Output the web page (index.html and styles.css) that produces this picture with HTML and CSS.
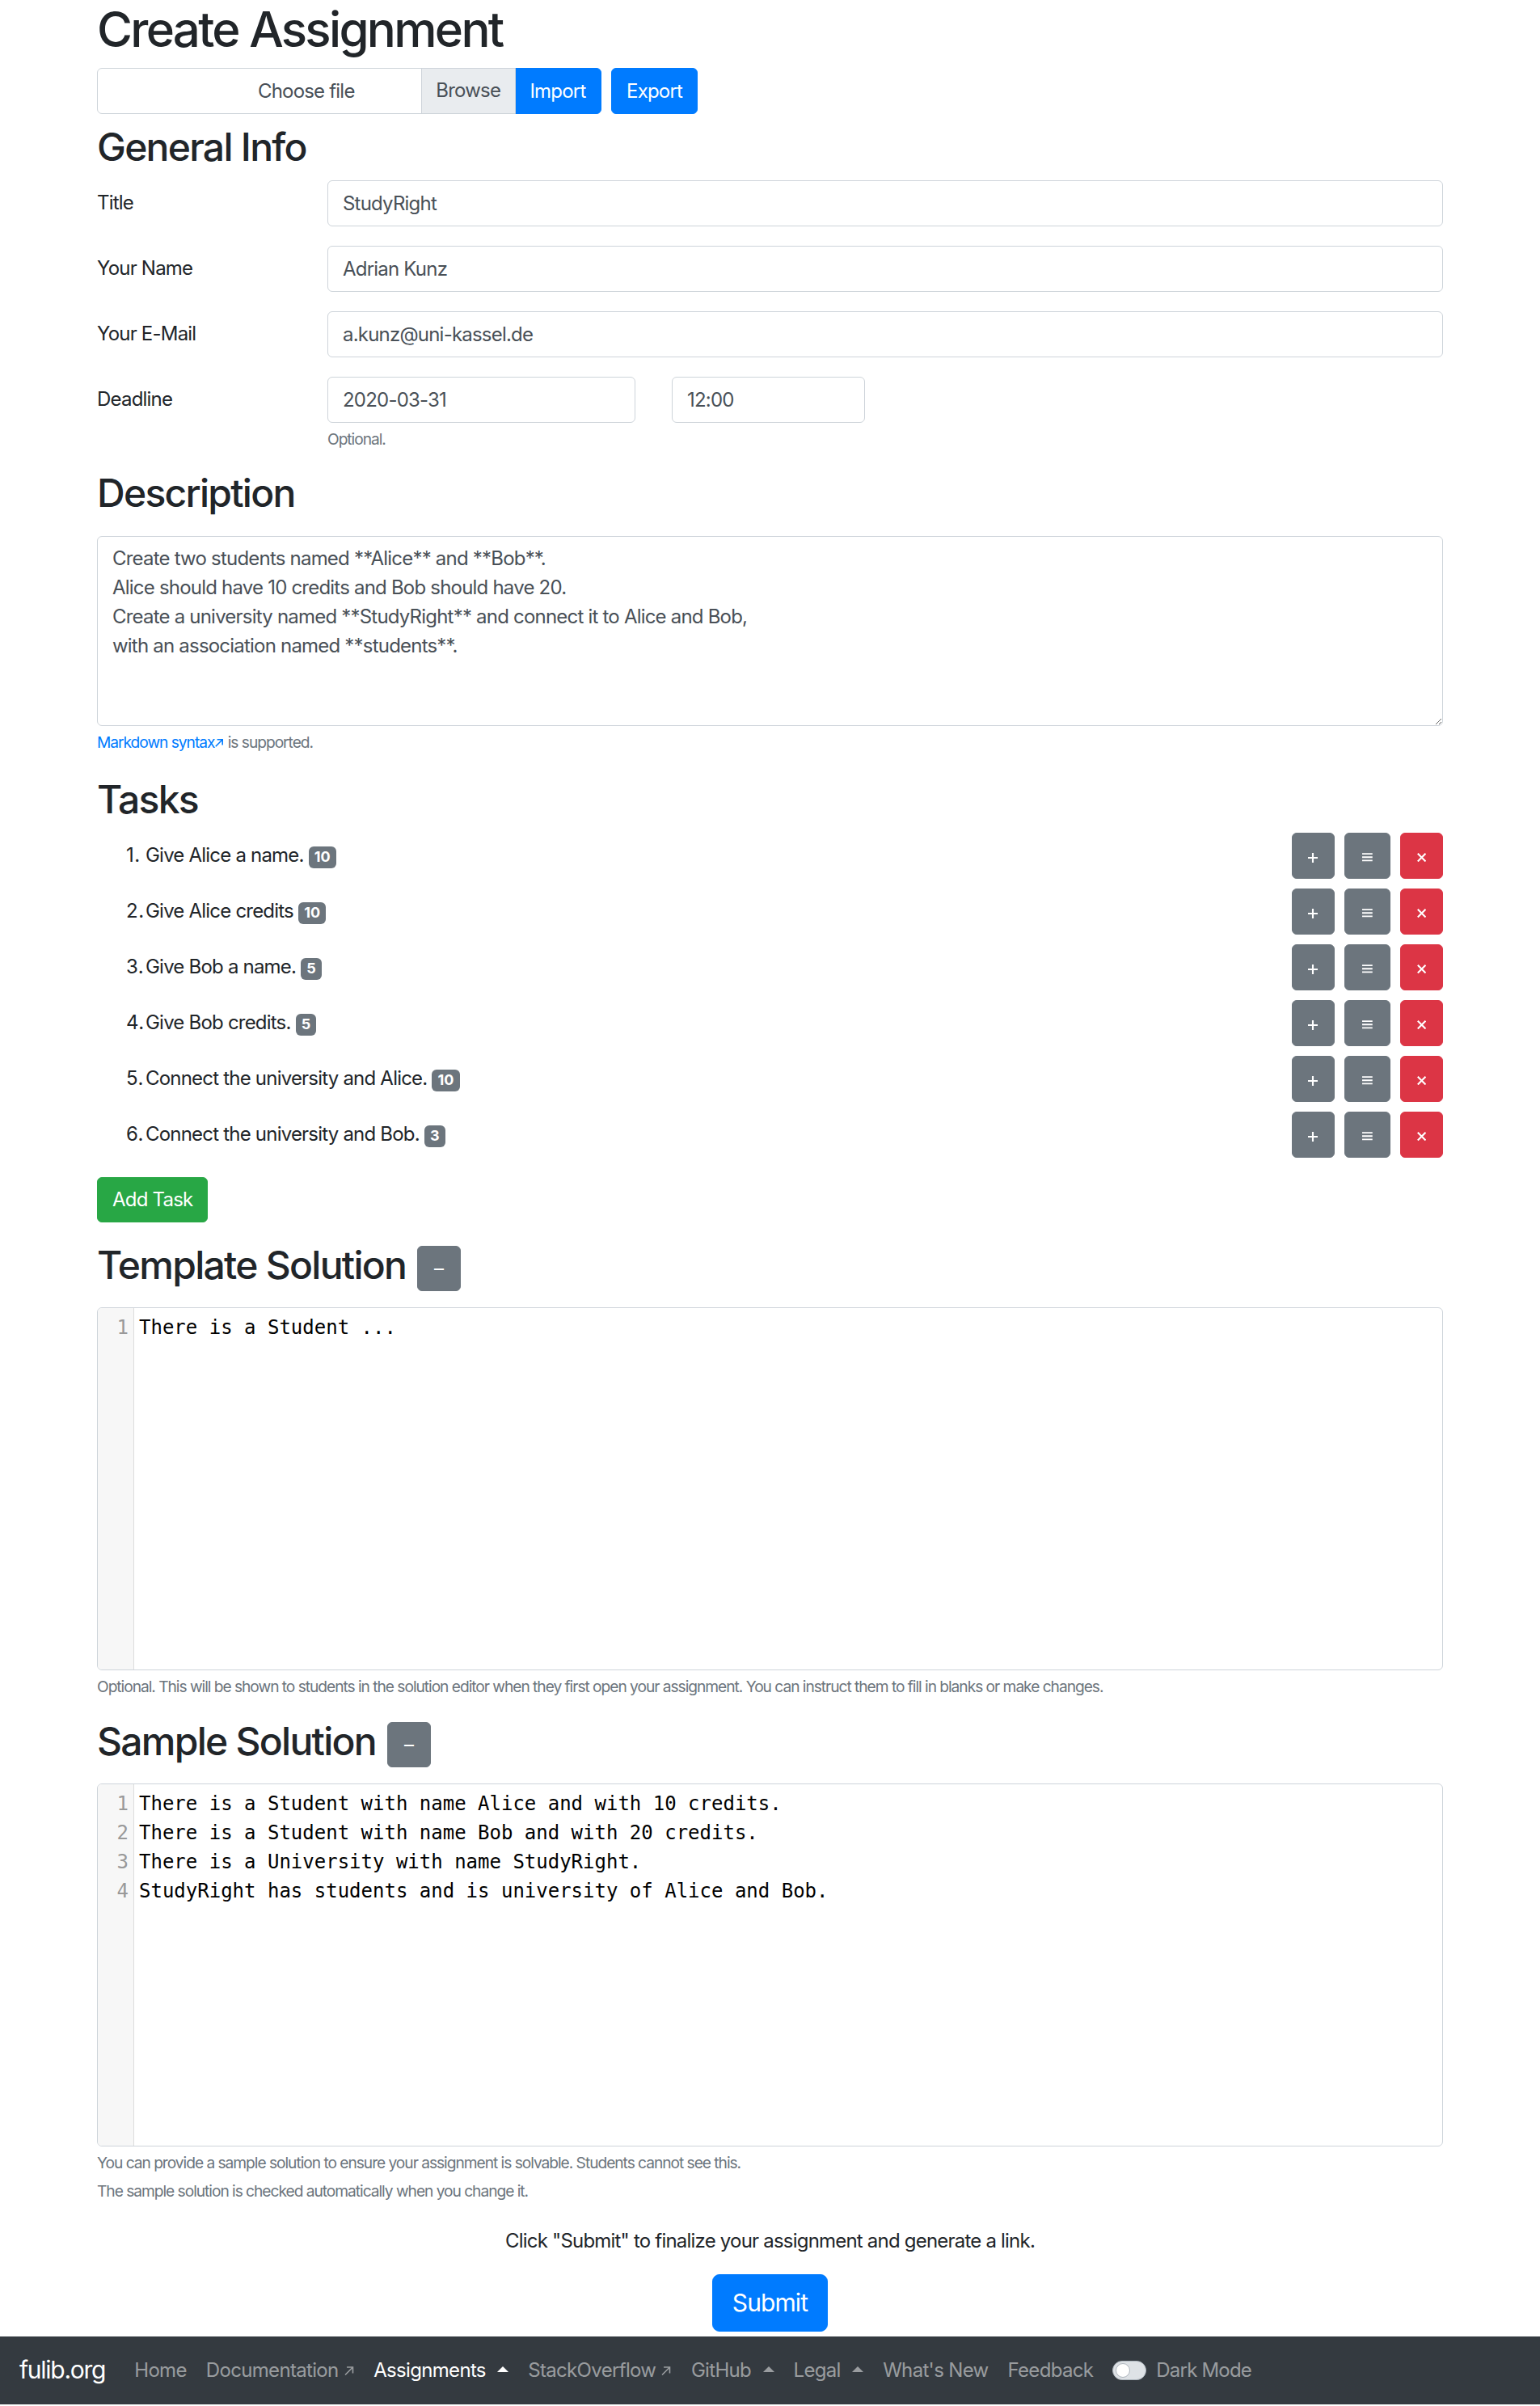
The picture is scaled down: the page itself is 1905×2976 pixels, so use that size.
FILE: index.html
```html
<!DOCTYPE html>
<html lang="en">
<head>
<meta charset="utf-8">
<title>Create Assignment</title>
<link rel="stylesheet" href="styles.css">
</head>
<body>
<main class="container">
  <h1 class="page-title">Create Assignment</h1>

  <div class="import-row">
    <div class="input-group">
      <label class="custom-file">
        <span class="custom-file-label">Choose file</span>
        <span class="custom-file-browse">Browse</span>
      </label>
      <button class="btn btn-primary btn-attached" type="button">Import</button>
    </div>
    <button class="btn btn-primary" type="button">Export</button>
  </div>

  <h2>General Info</h2>
  <div class="form-row">
    <label class="col-label">Title</label>
    <div class="col-field"><input class="form-control" type="text" value="StudyRight"></div>
  </div>
  <div class="form-row">
    <label class="col-label">Your Name</label>
    <div class="col-field"><input class="form-control" type="text" value="Adrian Kunz"></div>
  </div>
  <div class="form-row">
    <label class="col-label">Your E-Mail</label>
    <div class="col-field"><input class="form-control" type="text" value="a.kunz@uni-kassel.de"></div>
  </div>
  <div class="form-row">
    <label class="col-label">Deadline</label>
    <div class="col-field">
      <div class="deadline-fields">
        <input class="form-control date-input" type="text" value="2020-03-31">
        <input class="form-control time-input" type="text" value="12:00">
      </div>
      <small class="form-text">Optional.</small>
    </div>
  </div>

  <h2 class="heading-spaced">Description</h2>
  <div class="form-group description-group">
    <textarea class="form-control description" rows="6">Create two students named **Alice** and **Bob**.
Alice should have 10 credits and Bob should have 20.
Create a university named **StudyRight** and connect it to Alice and Bob,
with an association named **students**.</textarea>
    <small class="form-text"><a class="link" href="#">Markdown syntax<svg class="ext" viewBox="0 0 10 10" width="8" height="8"><path d="M1.5 8.5L8.5 1.5M3 1.5H8.5V7" fill="none" stroke="currentColor" stroke-width="1.3"/></svg></a> is supported.</small>
  </div>

  <h2>Tasks</h2>
  <ol class="task-list">
    <li class="task">
      <span class="task-text">Give Alice a name. <span class="badge">10</span></span>
      <div class="task-actions">
        <button class="btn btn-secondary btn-icon" type="button"><svg width="8" height="8" viewBox="0 0 8 8"><path d="M4 0V8M0 4H8" stroke="#fff" stroke-width="1.4"/></svg></button>
        <button class="btn btn-secondary btn-icon btn-wide" type="button"><svg width="8.5" height="7" viewBox="0 0 8.5 7"><path d="M0 .7H8.5M0 3.5H8.5M0 6.3H8.5" stroke="#fff" stroke-width="1.2"/></svg></button>
        <button class="btn btn-danger btn-icon" type="button"><svg width="7.5" height="7.5" viewBox="0 0 7 7"><path d="M.5 .5L6.5 6.5M6.5 .5L.5 6.5" stroke="#fff" stroke-width="1.3"/></svg></button>
      </div>
    </li>
    <li class="task">
      <span class="task-text">Give Alice credits <span class="badge">10</span></span>
      <div class="task-actions">
        <button class="btn btn-secondary btn-icon" type="button"><svg width="8" height="8" viewBox="0 0 8 8"><path d="M4 0V8M0 4H8" stroke="#fff" stroke-width="1.4"/></svg></button>
        <button class="btn btn-secondary btn-icon btn-wide" type="button"><svg width="8.5" height="7" viewBox="0 0 8.5 7"><path d="M0 .7H8.5M0 3.5H8.5M0 6.3H8.5" stroke="#fff" stroke-width="1.2"/></svg></button>
        <button class="btn btn-danger btn-icon" type="button"><svg width="7.5" height="7.5" viewBox="0 0 7 7"><path d="M.5 .5L6.5 6.5M6.5 .5L.5 6.5" stroke="#fff" stroke-width="1.3"/></svg></button>
      </div>
    </li>
    <li class="task">
      <span class="task-text">Give Bob a name. <span class="badge">5</span></span>
      <div class="task-actions">
        <button class="btn btn-secondary btn-icon" type="button"><svg width="8" height="8" viewBox="0 0 8 8"><path d="M4 0V8M0 4H8" stroke="#fff" stroke-width="1.4"/></svg></button>
        <button class="btn btn-secondary btn-icon btn-wide" type="button"><svg width="8.5" height="7" viewBox="0 0 8.5 7"><path d="M0 .7H8.5M0 3.5H8.5M0 6.3H8.5" stroke="#fff" stroke-width="1.2"/></svg></button>
        <button class="btn btn-danger btn-icon" type="button"><svg width="7.5" height="7.5" viewBox="0 0 7 7"><path d="M.5 .5L6.5 6.5M6.5 .5L.5 6.5" stroke="#fff" stroke-width="1.3"/></svg></button>
      </div>
    </li>
    <li class="task">
      <span class="task-text">Give Bob credits. <span class="badge">5</span></span>
      <div class="task-actions">
        <button class="btn btn-secondary btn-icon" type="button"><svg width="8" height="8" viewBox="0 0 8 8"><path d="M4 0V8M0 4H8" stroke="#fff" stroke-width="1.4"/></svg></button>
        <button class="btn btn-secondary btn-icon btn-wide" type="button"><svg width="8.5" height="7" viewBox="0 0 8.5 7"><path d="M0 .7H8.5M0 3.5H8.5M0 6.3H8.5" stroke="#fff" stroke-width="1.2"/></svg></button>
        <button class="btn btn-danger btn-icon" type="button"><svg width="7.5" height="7.5" viewBox="0 0 7 7"><path d="M.5 .5L6.5 6.5M6.5 .5L.5 6.5" stroke="#fff" stroke-width="1.3"/></svg></button>
      </div>
    </li>
    <li class="task">
      <span class="task-text">Connect the university and Alice. <span class="badge">10</span></span>
      <div class="task-actions">
        <button class="btn btn-secondary btn-icon" type="button"><svg width="8" height="8" viewBox="0 0 8 8"><path d="M4 0V8M0 4H8" stroke="#fff" stroke-width="1.4"/></svg></button>
        <button class="btn btn-secondary btn-icon btn-wide" type="button"><svg width="8.5" height="7" viewBox="0 0 8.5 7"><path d="M0 .7H8.5M0 3.5H8.5M0 6.3H8.5" stroke="#fff" stroke-width="1.2"/></svg></button>
        <button class="btn btn-danger btn-icon" type="button"><svg width="7.5" height="7.5" viewBox="0 0 7 7"><path d="M.5 .5L6.5 6.5M6.5 .5L.5 6.5" stroke="#fff" stroke-width="1.3"/></svg></button>
      </div>
    </li>
    <li class="task">
      <span class="task-text">Connect the university and Bob. <span class="badge">3</span></span>
      <div class="task-actions">
        <button class="btn btn-secondary btn-icon" type="button"><svg width="8" height="8" viewBox="0 0 8 8"><path d="M4 0V8M0 4H8" stroke="#fff" stroke-width="1.4"/></svg></button>
        <button class="btn btn-secondary btn-icon btn-wide" type="button"><svg width="8.5" height="7" viewBox="0 0 8.5 7"><path d="M0 .7H8.5M0 3.5H8.5M0 6.3H8.5" stroke="#fff" stroke-width="1.2"/></svg></button>
        <button class="btn btn-danger btn-icon" type="button"><svg width="7.5" height="7.5" viewBox="0 0 7 7"><path d="M.5 .5L6.5 6.5M6.5 .5L.5 6.5" stroke="#fff" stroke-width="1.3"/></svg></button>
      </div>
    </li>
  </ol>
  <div class="add-task-wrap">
    <button class="btn btn-success" type="button">Add Task</button>
  </div>

  <h2 class="heading-with-btn">Template Solution <button class="btn btn-secondary btn-collapse" type="button">–</button></h2>
  <div class="form-group">
    <div class="editor">
      <div class="editor-gutter"><div>1</div></div>
      <div class="editor-code"><div class="code-line">There is a Student ...</div></div>
    </div>
    <small class="form-text">Optional. This will be shown to students in the solution editor when they first open your assignment. You can instruct them to fill in blanks or make changes.</small>
  </div>

  <h2 class="heading-with-btn">Sample Solution <button class="btn btn-secondary btn-collapse" type="button">–</button></h2>
  <div class="form-group">
    <div class="editor">
      <div class="editor-gutter"><div>1</div><div>2</div><div>3</div><div>4</div></div>
      <div class="editor-code">
        <div class="code-line">There is a Student with name Alice and with 10 credits.</div>
        <div class="code-line">There is a Student with name Bob and with 20 credits.</div>
        <div class="code-line">There is a University with name StudyRight.</div>
        <div class="code-line">StudyRight has students and is university of Alice and Bob.</div>
      </div>
    </div>
    <small class="form-text">You can provide a sample solution to ensure your assignment is solvable. Students cannot see this.</small>
    <small class="form-text">The sample solution is checked automatically when you change it.</small>
  </div>

  <p class="submit-note">Click "Submit" to finalize your assignment and generate a link.</p>
  <div class="submit-wrap">
    <button class="btn btn-primary btn-lg" type="button">Submit</button>
  </div>
</main>

<nav class="navbar">
  <a class="brand" href="#">fulib.org</a>
  <ul class="nav">
    <li><a class="nav-link" href="#">Home</a></li>
    <li><a class="nav-link" href="#">Documentation <svg class="ext" viewBox="0 0 10 10" width="9" height="9"><path d="M1.5 8.5L8.5 1.5M3 1.5H8.5V7" fill="none" stroke="currentColor" stroke-width="1.2"/></svg></a></li>
    <li><a class="nav-link active dropup" href="#">Assignments</a></li>
    <li><a class="nav-link" href="#">StackOverflow <svg class="ext" viewBox="0 0 10 10" width="9" height="9"><path d="M1.5 8.5L8.5 1.5M3 1.5H8.5V7" fill="none" stroke="currentColor" stroke-width="1.2"/></svg></a></li>
    <li><a class="nav-link dropup" href="#">GitHub</a></li>
    <li><a class="nav-link dropup" href="#">Legal</a></li>
    <li><a class="nav-link" href="#">What's New</a></li>
    <li><a class="nav-link" href="#">Feedback</a></li>
  </ul>
  <label class="switch">
    <span class="switch-track"><span class="switch-knob"></span></span>
    <span class="switch-label">Dark Mode</span>
  </label>
</nav>
</body>
</html>
```

FILE: styles.css
```css
*,
*::before,
*::after {
  box-sizing: border-box;
}

html {
  background: #fff;
}

body {
  margin: 0;
  zoom: 1.5;
  font-family: Inter, "Noto Sans", "Liberation Sans", sans-serif;
  font-size: 16px;
  line-height: 1.5;
  letter-spacing: -0.033em;
  color: #212529;
  background: #fff;
}

.container {
  max-width: 1140px;
  margin: 0 auto;
  padding: 0 15px;
}

h1,
h2 {
  font-weight: 500;
  line-height: 1.2;
  margin: 0 0 8px;
}

h1 {
  font-size: 40px;
  letter-spacing: -0.045em;
}

h2 {
  font-size: 32px;
  letter-spacing: -0.036em;
}

.heading-spaced {
  margin-bottom: 16px;
}

/* buttons */
.btn {
  display: inline-flex;
  align-items: center;
  justify-content: center;
  font-family: inherit;
  font-size: 16px;
  font-weight: 400;
  line-height: 24px;
  letter-spacing: -0.033em;
  padding: 6px 12px;
  border: 1px solid transparent;
  border-radius: 4px;
  color: #fff;
  cursor: pointer;
  vertical-align: middle;
}

.btn-primary {
  background: #007bff;
  border-color: #007bff;
}

.btn-secondary {
  background: #6c757d;
  border-color: #6c757d;
}

.btn-danger {
  background: #dc3545;
  border-color: #dc3545;
}

.btn-success {
  background: #28a745;
  border-color: #28a745;
}

.btn-lg {
  padding: 8px 16px;
  font-size: 20px;
  line-height: 30px;
  letter-spacing: -0.03em;
  border-radius: 6px;
}

/* import / export */
.import-row {
  display: flex;
  gap: 8px;
  height: 38px;
  margin-bottom: 8px;
}

.input-group {
  display: flex;
}

.custom-file {
  position: relative;
  display: flex;
  align-items: center;
  justify-content: center;
  width: 345px;
  height: 38px;
  border: 1px solid #ced4da;
  border-radius: 4px 0 0 4px;
  color: #495057;
  background: #fff;
}

.custom-file-browse {
  position: absolute;
  top: 0;
  right: 0;
  bottom: 0;
  width: 77px;
  padding: 6px 0;
  text-align: center;
  line-height: 24px;
  background: #e9ecef;
  border-left: 1px solid #ced4da;
  color: #495057;
}

.btn-attached {
  width: 72px;
  border-radius: 0 4px 4px 0;
  margin-left: -1px;
}

/* form rows */
.form-row {
  display: flex;
  margin: 0 -15px 16px;
}

.col-label {
  flex: 0 0 16.666667%;
  max-width: 16.666667%;
  padding: 7px 15px;
  line-height: 24px;
}

.col-field {
  flex: 0 0 83.333333%;
  max-width: 83.333333%;
  padding: 0 15px;
}

.form-control {
  display: block;
  width: 100%;
  height: 38px;
  padding: 6px 12px;
  font-family: inherit;
  font-size: 16px;
  line-height: 24px;
  letter-spacing: -0.033em;
  color: #495057;
  background: #fff;
  border: 1px solid #ced4da;
  border-radius: 4px;
  outline: none;
}

.deadline-fields {
  display: flex;
  gap: 30px;
}

.date-input {
  width: 254px;
}

.time-input {
  width: 159px;
}

.form-text {
  display: block;
  margin-top: 4px;
  font-size: 12.8px;
  line-height: 19.2px;
  letter-spacing: -0.054em;
  color: #6c757d;
}

.form-group {
  margin-bottom: 16px;
}

.description-group {
  margin-bottom: 18px;
}

.description {
  height: 157px;
  resize: vertical;
}

.link {
  color: #007bff;
  text-decoration: none;
}

.ext {
  display: inline-block;
  vertical-align: baseline;
}

/* tasks */
.task-list {
  list-style: none;
  margin: 0 0 16px;
  padding: 0;
  counter-reset: task;
}

.task {
  display: flex;
  align-items: center;
  justify-content: space-between;
  height: 38px;
  counter-increment: task;
}

.task + .task {
  margin-top: 8px;
}

.task-text::before {
  content: counter(task) ".";
  display: inline-block;
  width: 40px;
  padding-left: 24px;
  letter-spacing: 0.02em;
}

.badge {
  display: inline-block;
  padding: 3px 4.8px;
  font-size: 12px;
  font-weight: 700;
  line-height: 1;
  letter-spacing: 0;
  color: #fff;
  background: #6c757d;
  border-radius: 4px;
  vertical-align: baseline;
}

.task-actions {
  display: flex;
  gap: 8px;
}

.btn-icon {
  width: 35.5px;
  height: 38px;
  padding: 0;
}

.btn-icon svg {
  display: block;
  margin-top: 3px;
}

.btn-wide {
  width: 38px;
}

.add-task-wrap {
  margin-bottom: 16px;
}

/* headings with collapse button */
.heading-with-btn {
  display: flex;
  align-items: center;
  gap: 9px;
  margin-bottom: 16px;
}

.btn-collapse {
  width: 36px;
  padding: 6px 0;
  margin: 3px 0 -3px;
}

/* editors */
.editor {
  display: flex;
  height: 299px;
  border: 1px solid #ced4da;
  border-radius: 4px;
  overflow: hidden;
  font-family: "DejaVu Sans Mono", "Liberation Mono", monospace;
  font-size: 16px;
  line-height: 24px;
  letter-spacing: 0;
}

.editor-gutter {
  flex: 0 0 30px;
  padding: 4px 4px 0 0;
  text-align: right;
  color: #999;
  background: #f7f7f7;
  border-right: 1px solid #ddd;
}

.editor-code {
  flex: 1;
  padding: 4px 4px 0;
  color: #000;
}

.code-line {
  white-space: pre;
}

/* submit */
.submit-note {
  text-align: center;
  margin: 20px 0 15px;
}

.submit-wrap {
  text-align: center;
  margin-bottom: 4px;
}

/* navbar */
.navbar {
  display: flex;
  align-items: center;
  height: 56px;
  padding: 8px 16px;
  background: #343a40;
}

.brand {
  margin-right: 16px;
  font-size: 20px;
  line-height: 30px;
  letter-spacing: -0.042em;
  color: #fff;
  text-decoration: none;
}

.nav {
  display: flex;
  margin: 0;
  padding: 0;
  list-style: none;
}

.nav-link {
  display: block;
  padding: 8px;
  line-height: 24px;
  letter-spacing: -0.028em;
  color: rgba(255, 255, 255, 0.5);
  text-decoration: none;
  white-space: nowrap;
}

.nav-link.active {
  color: #fff;
}

.dropup::after {
  content: "";
  display: inline-block;
  margin-left: 0.6em;
  vertical-align: 0.255em;
  border-top: 0;
  border-right: 0.3em solid transparent;
  border-bottom: 0.3em solid;
  border-left: 0.3em solid transparent;
}

.switch {
  display: flex;
  align-items: center;
  gap: 8px;
  margin-left: 8px;
  color: rgba(255, 255, 255, 0.5);
  line-height: 24px;
}

.switch-track {
  display: flex;
  align-items: center;
  width: 28px;
  height: 16px;
  padding: 0 2px;
  border: 1px solid #adb5bd;
  border-radius: 8px;
  background: #dee2e6;
}

.switch-knob {
  width: 12px;
  height: 12px;
  border-radius: 50%;
  background: #fff;
  border: 1px solid #adb5bd;
}
```
